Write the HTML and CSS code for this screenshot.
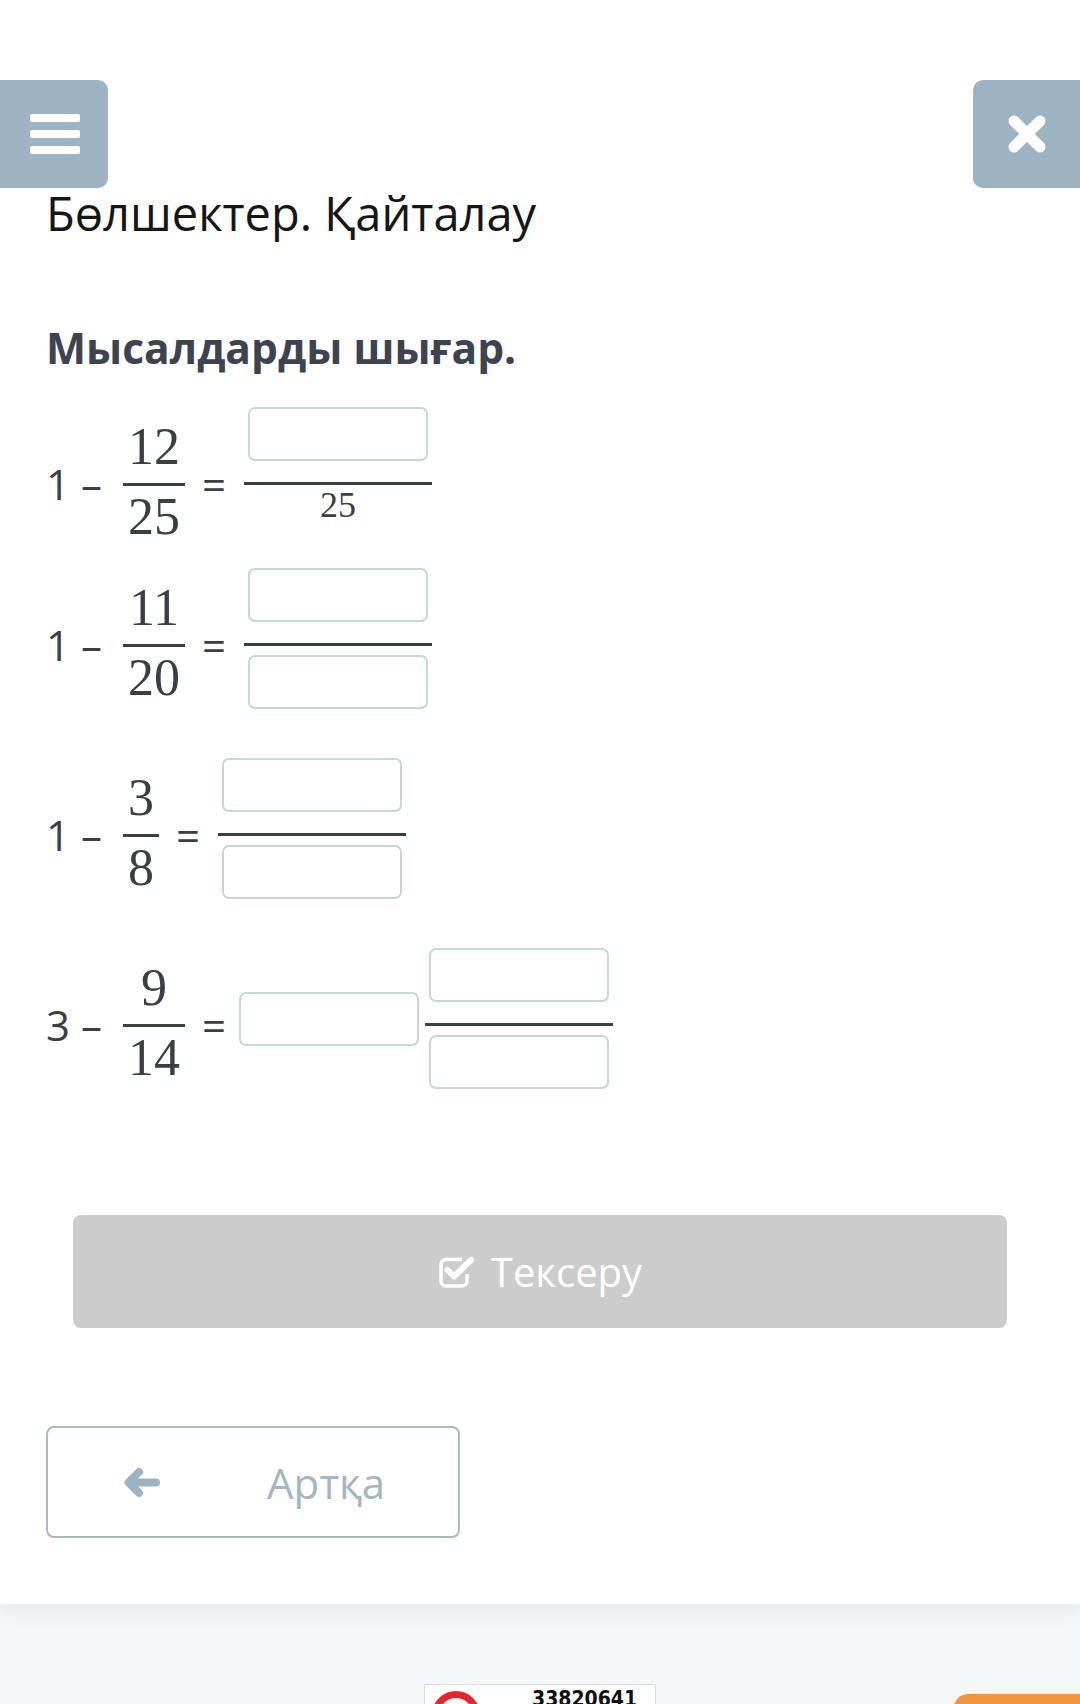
FILE: index.html
```html
<!DOCTYPE html>
<html lang="kk">
<head>
  <meta charset="UTF-8">
  <meta name="viewport" content="width=device-width, initial-scale=1.0">
  <title>Бөлшектер. Қайталау</title>
  <link rel="stylesheet" href="styles.css">
</head>
<body>

<div class="card">
  <div class="topbar">
    <button class="icon-btn menu-btn" aria-label="Menu">
      <svg width="50" height="40" viewBox="0 0 50 40">
        <rect x="0" y="0" width="50" height="8" rx="2"/>
        <rect x="0" y="16" width="50" height="8" rx="2"/>
        <rect x="0" y="32" width="50" height="8" rx="2"/>
      </svg>
    </button>
    <button class="icon-btn close-btn" aria-label="Close">
      <svg width="38" height="38" viewBox="0 0 38 38">
        <path d="M6 6 L32 32 M32 6 L6 32"/>
      </svg>
    </button>
  </div>

  <div class="content">
    <h1 class="title">Бөлшектер. Қайталау</h1>
    <h2 class="task">Мысалдарды шығар.</h2>

    <!-- 1 - 12/25 -->
    <div class="row row-given">
      <span class="int">1</span>
      <span class="op">–</span>
      <span class="frac"><span class="num">12</span><span class="bar"></span><span class="den">25</span></span>
      <span class="eq">=</span>
      <span class="answer answer-given">
        <input class="field" type="text">
        <span class="bar"></span>
        <span class="den-text">25</span>
      </span>
    </div>

    <!-- 1 - 11/20 -->
    <div class="row">
      <span class="int">1</span>
      <span class="op">–</span>
      <span class="frac"><span class="num">11</span><span class="bar"></span><span class="den">20</span></span>
      <span class="eq">=</span>
      <span class="answer">
        <input class="field" type="text">
        <span class="bar"></span>
        <input class="field field-den" type="text">
      </span>
    </div>

    <!-- 1 - 3/8 -->
    <div class="row">
      <span class="int">1</span>
      <span class="op">–</span>
      <span class="frac"><span class="num">3</span><span class="bar"></span><span class="den">8</span></span>
      <span class="eq">=</span>
      <span class="answer">
        <input class="field" type="text">
        <span class="bar"></span>
        <input class="field field-den" type="text">
      </span>
    </div>

    <!-- 3 - 9/14 -->
    <div class="row">
      <span class="int">3</span>
      <span class="op">–</span>
      <span class="frac"><span class="num">9</span><span class="bar"></span><span class="den">14</span></span>
      <span class="eq">=</span>
      <input class="field whole" type="text">
      <span class="answer">
        <input class="field" type="text">
        <span class="bar"></span>
        <input class="field field-den" type="text">
      </span>
    </div>

    <button class="check-btn">
      <svg width="38" height="32" viewBox="0 0 38 32">
        <path class="box" d="M24 3.5 H8 a5 5 0 0 0 -5 5 V25 a5 5 0 0 0 5 5 H24 a5 5 0 0 0 5 -5 V18"/>
        <path class="tick" d="M9.5 14 L16 20.5 L33 4"/>
      </svg>
      <span>Тексеру</span>
    </button>

    <button class="back-btn">
      <svg width="37" height="31" viewBox="0 0 37 31">
        <path d="M33 15.5 H7 M16 5 L5.5 15.5 L16 26"/>
      </svg>
      <span class="back-label">Артқа</span>
    </button>
  </div>
</div>

<div class="footer">
  <div class="counter">
    <span class="counter-ring"></span>
    <span class="counter-num">33820641</span>
  </div>
  <div class="help-tab"></div>
</div>

</body>
</html>
```

FILE: styles.css
```css
body {
  margin: 0;
  padding: 0;
  font-family: "Open Sans", Arial, sans-serif;
  background-color: #f4f7f9;
  overflow-x: hidden;
}

.card {
  position: relative;
  z-index: 1;
  background-color: #fff;
  padding-bottom: 66px;
  box-shadow: 0 4px 22px rgba(0, 0, 0, 0.08);
}

/* Top buttons */
.topbar {
  display: flex;
  justify-content: space-between;
  padding-top: 80px;
}

.icon-btn {
  display: flex;
  align-items: center;
  justify-content: center;
  height: 108px;
  border: none;
  padding: 0;
  background-color: #9eb3c2;
  cursor: pointer;
}

.menu-btn {
  width: 108px;
  border-radius: 0 10px 10px 0;
}

.menu-btn svg {
  fill: #fff;
  margin-left: 1px;
}

.close-btn {
  width: 107px;
  border-radius: 10px 0 0 10px;
}

.close-btn svg path {
  stroke: #fff;
  stroke-width: 11;
  stroke-linecap: round;
  fill: none;
}

.content {
  padding: 0 46px;
}

.title {
  margin: 0;
  font-size: 47px;
  font-weight: 400;
  line-height: 51px;
  color: #161616;
}

.task {
  margin: 85px 0 35px;
  font-size: 42.5px;
  font-weight: 700;
  line-height: 48px;
  color: #3d4450;
}

/* Exercise rows */
.row {
  display: flex;
  align-items: center;
  margin-bottom: 36px;
  color: #3a3f45;
}

.row-given {
  margin-bottom: 7px;
}

.int,
.op,
.eq {
  font-size: 42px;
  line-height: 1;
}

.int {
  margin-right: 11px;
}

.op {
  margin-right: 21px;
}

.eq {
  margin: 0 18px 0 17px;
}

.frac {
  display: inline-flex;
  flex-direction: column;
  align-items: center;
  padding-bottom: 5px;
  font-family: "Liberation Serif", "Times New Roman", serif;
  font-size: 52px;
}

.frac .num,
.frac .den {
  line-height: 40px;
  padding: 0 5px;
}

.frac .num {
  margin-bottom: 16px;
}

.frac .den {
  margin-top: 11px;
}

.bar {
  display: block;
  align-self: stretch;
  height: 3px;
  background-color: #3b4046;
}

.answer {
  display: inline-flex;
  flex-direction: column;
  padding-bottom: 13px;
}

.field {
  box-sizing: border-box;
  width: 180px;
  height: 54px;
  margin: 0 4px 21px;
  padding: 0 10px;
  border: 2px solid #c6d8d6;
  border-radius: 7px;
  background-color: #fff;
  font-family: "Open Sans", Arial, sans-serif;
  font-size: 30px;
  outline: none;
}

.field-den {
  margin-top: 9px;
  margin-bottom: 0;
}

.whole {
  margin: 0 6px 12px -5px;
}

.answer-given {
  padding-bottom: 38px;
}

.den-text {
  margin-top: 3px;
  font-family: "Liberation Serif", "Times New Roman", serif;
  font-size: 36px;
  line-height: 35px;
  text-align: center;
}

/* Buttons (top margin collapses with the last row's margin) */
.check-btn {
  display: flex;
  align-items: center;
  justify-content: center;
  gap: 15px;
  width: calc(100% - 54px);
  height: 113px;
  margin: 113px auto 0;
  border: none;
  border-radius: 8px;
  background-color: #cccccc;
  color: #fff;
  font-family: "Open Sans", Arial, sans-serif;
  font-size: 40px;
  cursor: pointer;
}

.check-btn svg path {
  fill: none;
  stroke: #fff;
  stroke-linejoin: round;
}

.check-btn .box {
  stroke-width: 3.5;
}

.check-btn .tick {
  stroke-width: 6;
  stroke-linecap: round;
}

.back-btn {
  display: flex;
  align-items: center;
  width: 414px;
  height: 112px;
  margin-top: 98px;
  padding: 0 0 0 75px;
  border: 2px solid #a9b9c4;
  border-radius: 8px;
  background-color: #fff;
  color: #a4b6c3;
  font-family: "Open Sans", Arial, sans-serif;
  font-size: 42px;
  cursor: pointer;
}

.back-btn svg path {
  fill: none;
  stroke: #9eb3c2;
  stroke-width: 8;
  stroke-linecap: round;
  stroke-linejoin: round;
}

.back-label {
  flex: 1;
  padding-left: 34px;
  text-align: center;
}

/* Footer */
.footer {
  position: relative;
  height: 220px;
  padding-top: 80px;
  background-color: #f4f7f9;
}

.counter {
  display: flex;
  width: 230px;
  height: 80px;
  margin: 0 auto;
  border: 1px solid #d8dde1;
  background-color: #fff;
}

.counter-ring {
  box-sizing: border-box;
  width: 48px;
  height: 48px;
  margin: 6px 0 0 7px;
  border: 7px solid #e3262b;
  border-radius: 50%;
}

.counter-num {
  margin: 2px 0 0 52px;
  font-family: "DejaVu Sans Condensed", "Liberation Sans Narrow", sans-serif;
  font-size: 21px;
  font-weight: bold;
  letter-spacing: 0;
  color: #111;
}

.help-tab {
  position: absolute;
  top: 90px;
  right: 0;
  width: 126px;
  height: 60px;
  border-radius: 14px 0 0 0;
  background-color: #f0953f;
}
```
